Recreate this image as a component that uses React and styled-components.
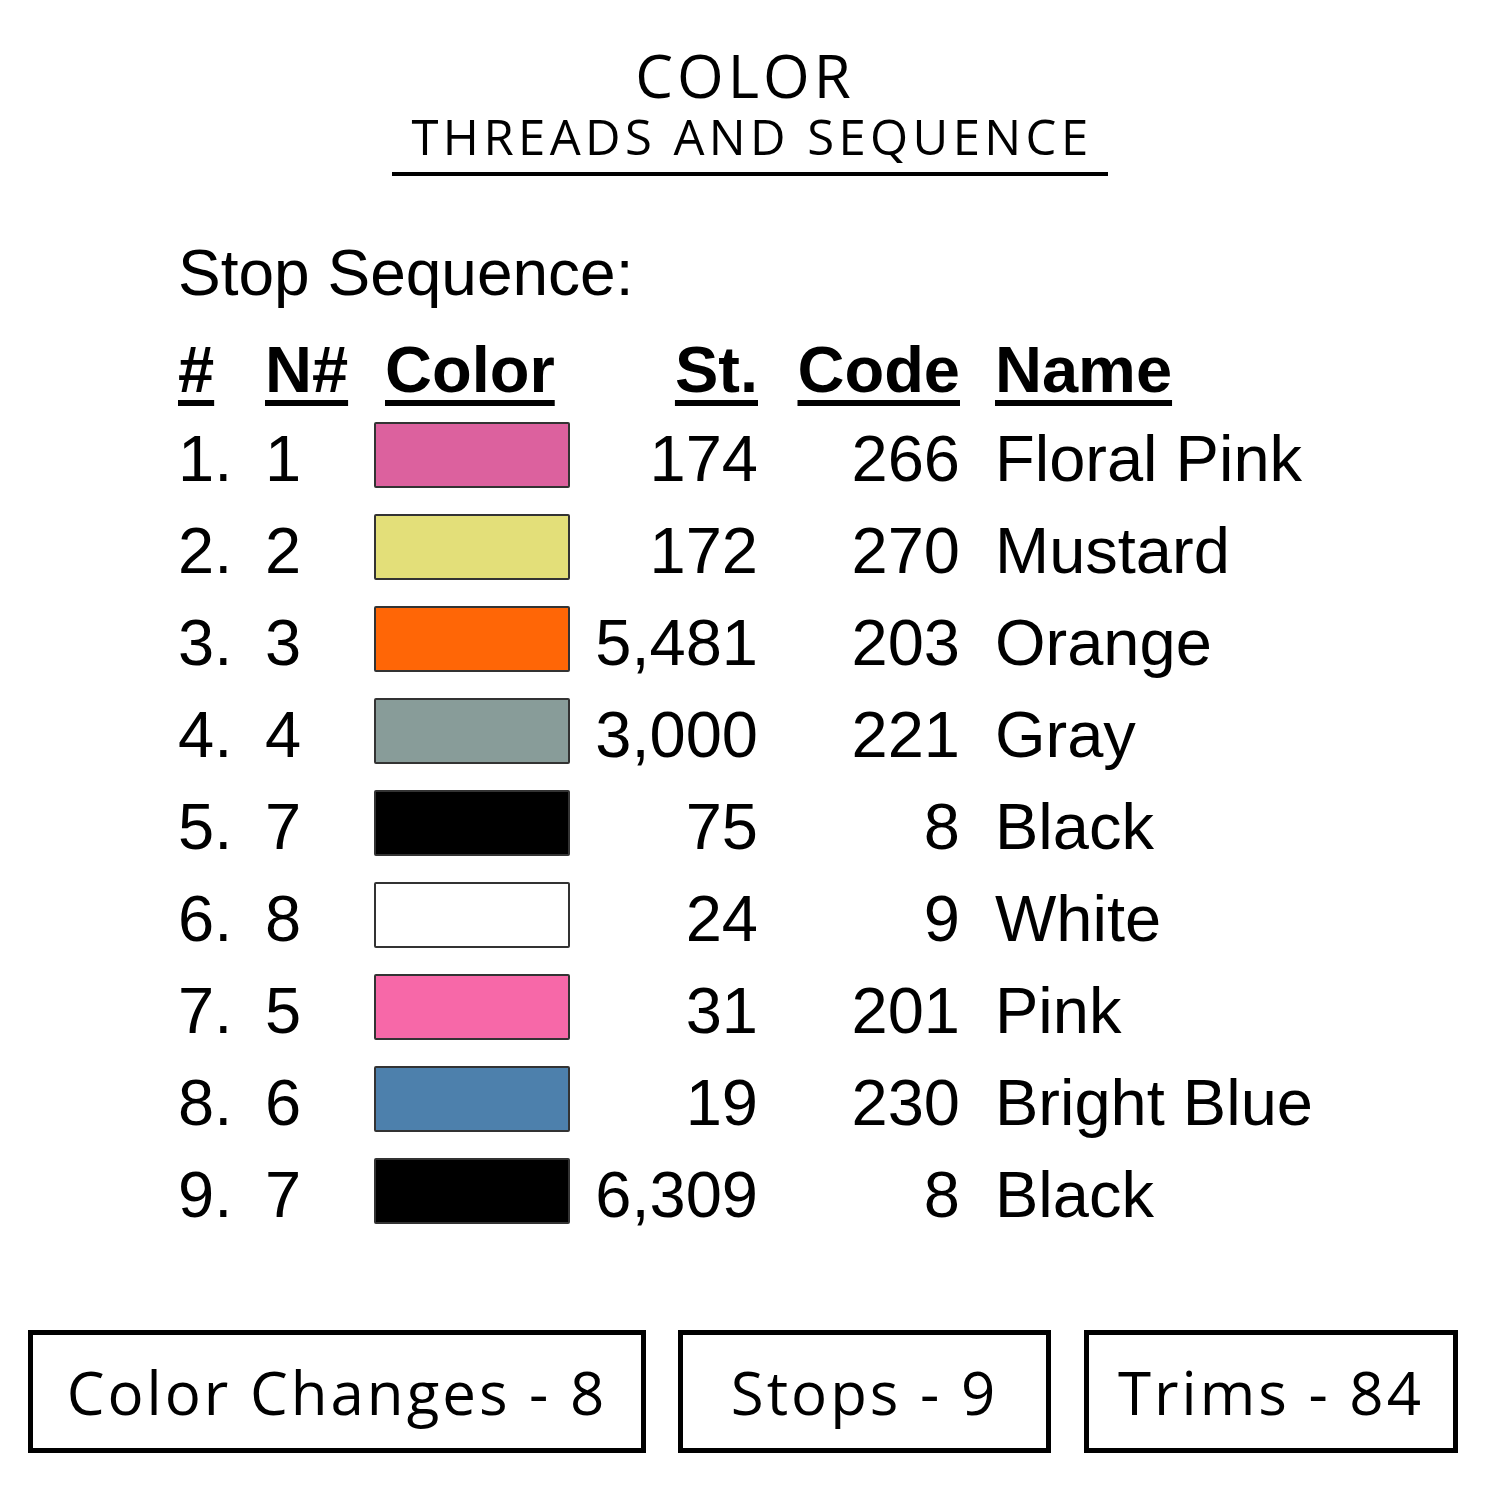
import React from "react";
import styled, { createGlobalStyle } from "styled-components";

const Global = createGlobalStyle`
  html, body { margin: 0; padding: 0; background: #fff; }
  #root { width: 1500px; height: 1500px; }
`;

const Page = styled.div`
  width: 1500px;
  height: 1500px;
  box-sizing: border-box;
  background: #fff;
  display: flex;
  flex-direction: column;
  align-items: stretch;
  padding-top: 42px;
`;

const TitleBlock = styled.header`
  display: flex;
  flex-direction: column;
  align-items: center;
  font-family: "Open Sans", "Lato", sans-serif;
  color: #000;
`;

const MainTitle = styled.h1`
  margin: 0;
  font-size: 60px;
  font-weight: 500;
  line-height: 66px;
  letter-spacing: 4px;
  padding-right: 10px;
`;

const SubTitle = styled.h2`
  margin: 0;
  font-size: 49px;
  font-weight: 400;
  line-height: 56px;
  letter-spacing: 4.4px;
  width: 716px;
  box-sizing: border-box;
  padding-left: 4px;
  text-align: center;
  padding-bottom: 8px;
  border-bottom: 4px solid #000;
`;

const Section = styled.section`
  margin-left: 178px;
  margin-top: 58px;
  font-family: "Liberation Sans", Arial, sans-serif;
  color: #000;
`;

const SectionTitle = styled.div`
  font-size: 64px;
  line-height: 70px;
  padding-top: 4px;
`;

const Grid = styled.div`
  display: grid;
  grid-template-columns: 87px 109px 196px 188px 202px auto;
  grid-template-rows: 84px;
  grid-auto-rows: 92px;
  align-items: center;
  font-size: 65px;
  margin-top: 17px;
`;

const Head = styled.div`
  font-weight: 700;
  justify-self: ${(p) => p.$align || "start"};
  margin-left: ${(p) => p.$indent || 0}px;
  padding-top: 4px;
  text-decoration: underline;
  text-decoration-thickness: 6px;
  text-underline-offset: 8px;
  line-height: 1;
`;

const Cell = styled.div`
  justify-self: ${(p) => p.$align || "start"};
  padding-left: ${(p) => p.$pad || 0}px;
  padding-top: 6px;
  line-height: 1;
`;

const Swatch = styled.div`
  width: 196px;
  height: 66px;
  box-sizing: border-box;
  border: 2px solid #333;
  border-radius: 2px;
  background: ${(p) => p.$color};
  justify-self: start;
`;

const HeaderRow = styled.div`
  display: contents;
`;

const Footer = styled.footer`
  margin-top: auto;
  margin-bottom: 47px;
  display: flex;
  padding-left: 28px;
  font-family: "Open Sans", "Lato", sans-serif;
`;

const StatBox = styled.div`
  box-sizing: border-box;
  width: ${(p) => p.$w}px;
  margin-left: ${(p) => p.$gap || 0}px;
  height: 123px;
  border: 5px solid #000;
  display: flex;
  align-items: center;
  justify-content: center;
  font-size: 60px;
  letter-spacing: 3px;
  color: #000;
`;

const rows = [
  ["1.", "1", "#dc619e", "174", "266", "Floral Pink"],
  ["2.", "2", "#e3df79", "172", "270", "Mustard"],
  ["3.", "3", "#ff6606", "5,481", "203", "Orange"],
  ["4.", "4", "#889c99", "3,000", "221", "Gray"],
  ["5.", "7", "#000000", "75", "8", "Black"],
  ["6.", "8", "#ffffff", "24", "9", "White"],
  ["7.", "5", "#f768a8", "31", "201", "Pink"],
  ["8.", "6", "#4d80ac", "19", "230", "Bright Blue"],
  ["9.", "7", "#000000", "6,309", "8", "Black"],
];

export default function App() {
  return (
    <Page>
      <Global />
      <TitleBlock>
        <MainTitle>COLOR</MainTitle>
        <SubTitle>THREADS AND SEQUENCE</SubTitle>
      </TitleBlock>
      <Section>
        <SectionTitle>Stop Sequence:</SectionTitle>
        <Grid>
          <HeaderRow>
            <Head>#</Head>
            <Head>N#</Head>
            <Head $indent={11}>Color</Head>
            <Head $align="end">St.</Head>
            <Head $align="end">Code</Head>
            <Head $indent={35}>Name</Head>
          </HeaderRow>
          {rows.map((r, i) => (
            <React.Fragment key={i}>
              <Cell>{r[0]}</Cell>
              <Cell>{r[1]}</Cell>
              <Swatch $color={r[2]} />
              <Cell $align="end">{r[3]}</Cell>
              <Cell $align="end">{r[4]}</Cell>
              <Cell $pad={35}>{r[5]}</Cell>
            </React.Fragment>
          ))}
        </Grid>
      </Section>
      <Footer>
        <StatBox $w={618}>Color Changes - 8</StatBox>
        <StatBox $w={373} $gap={32}>Stops - 9</StatBox>
        <StatBox $w={374} $gap={33}>Trims - 84</StatBox>
      </Footer>
    </Page>
  );
}
